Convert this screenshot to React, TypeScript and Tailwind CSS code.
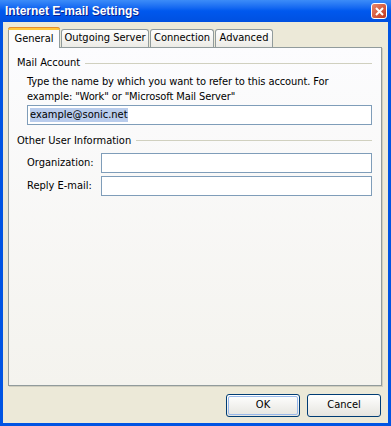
import React from 'react'

const font = { fontFamily: 'Tahoma, "DejaVu Sans Condensed", "Liberation Sans", sans-serif' }

function Tab({ label, active, w }: { label: string; active?: boolean; w: string }) {
  if (active) {
    return (
      <div className={`${w} relative z-10 -mb-px h-[21px] border border-b-0 border-[#919B9C] bg-[#FCFCFE] rounded-t-[3px] flex items-center justify-center`}>
        <div className="absolute -left-px -right-px -top-px h-[3px] rounded-t-[3px] bg-[#FFC83C] border-t border-[#E68B2C]" />
        <span className="pt-[2px]">{label}</span>
      </div>
    )
  }
  return (
    <div className={`${w} mt-[2px] h-[18px] border border-b-0 border-[#919B9C] rounded-t-[3px] bg-gradient-to-b from-white to-[#ECEBE6] flex items-center justify-center`}>
      <span>{label}</span>
    </div>
  )
}

function Group({ title }: { title: string }) {
  return (
    <div className="flex items-center gap-[5px]">
      <span>{title}</span>
      <div className="flex-1 h-px bg-[#D0D0BF]" />
    </div>
  )
}

function Field({ label }: { label: string }) {
  return (
    <div className="flex items-center">
      <span className="w-[74px] shrink-0">{label}</span>
      <div className="flex-1 h-[20px] border border-[#7F9DB9] bg-white" />
    </div>
  )
}

function Button({ label, focus }: { label: string; focus?: boolean }) {
  return (
    <div className="w-[74px] h-[23px] rounded-[3px] border border-[#003C74] bg-gradient-to-b from-white to-[#E6E5DF] flex items-center justify-center">
      {focus ? (
        <div className="w-[70px] h-[19px] rounded-[2px] border border-[#98B8EA] flex items-center justify-center">{label}</div>
      ) : (
        <span>{label}</span>
      )}
    </div>
  )
}

export default function App() {
  return (
    <div style={font} className="w-[391px] h-[426px] flex flex-col text-[11px] text-black bg-[#0054E3]">
      <div className="h-[22px] shrink-0 flex items-center justify-between pl-[5px] pr-[4px] bg-gradient-to-b from-[#3C8CF8] via-[#0058EE] to-[#0050E0]">
        <span className="text-white font-bold text-[12px]" style={{ fontFamily: '"Liberation Sans", Arial, sans-serif', textShadow: '1px 1px #0A1E8C' }}>
          Internet E-mail Settings
        </span>
        <div className="w-[16px] h-[16px] rounded-[3px] border border-white bg-gradient-to-br from-[#E8866A] to-[#C2331A] flex items-center justify-center">
          <svg width="9" height="9" viewBox="0 0 9 9">
            <path d="M1 1 L8 8 M8 1 L1 8" stroke="white" strokeWidth="2" />
          </svg>
        </div>
      </div>
      <div className="flex-1 mx-[3px] mb-[3px] bg-[#ECE9D8] flex flex-col pl-[5px] pr-[6px] pt-[4px] pb-[6px]">
        <div className="flex items-end gap-px h-[21px]">
          <Tab label="General" active w="w-[52px]" />
          <Tab label="Outgoing Server" w="w-[88px]" />
          <Tab label="Connection" w="w-[64px]" />
          <Tab label="Advanced" w="w-[58px]" />
        </div>
        <div className="flex-1 border border-[#919B9C] bg-gradient-to-b from-[#FCFCFE] to-[#F4F3EE] pl-[8px] pr-[9px] pt-[7px] flex flex-col shadow-[1px_1px_0_#D0CEBF]">
          <Group title="Mail Account" />
          <div className="pl-[10px] mt-[2px] leading-[15px] tracking-[-0.1px]">
            Type the name by which you want to refer to this account. For example: "Work" or "Microsoft Mail Server"
          </div>
          <div className="ml-[10px] mt-[1px] h-[20px] border border-[#7F9DB9] bg-white flex items-center px-[2px]">
            <span className="bg-[#B9CCEC] leading-[14px]">example@sonic.net</span>
          </div>
          <div className="mt-[8px]">
            <Group title="Other User Information" />
          </div>
          <div className="pl-[10px] mt-[4px] flex flex-col gap-[3px]">
            <Field label="Organization:" />
            <Field label="Reply E-mail:" />
          </div>
        </div>
        <div className="flex justify-end gap-[7px] pt-[8px] pr-px">
          <Button label="OK" focus />
          <Button label="Cancel" />
        </div>
      </div>
    </div>
  )
}
